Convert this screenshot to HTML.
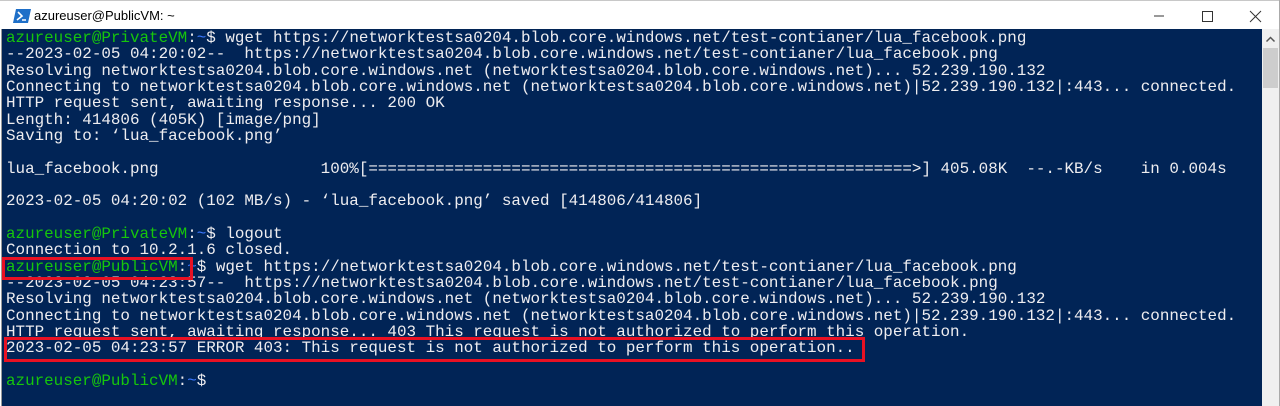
<!DOCTYPE html>
<html><head><meta charset="utf-8"><style>
*{margin:0;padding:0;box-sizing:border-box}
body{width:1280px;height:406px;overflow:hidden;background:#fff;position:relative;font-family:"Liberation Sans",sans-serif}
#title{position:absolute;left:0;top:0;width:1280px;height:29px;background:#fff;border-top:1px solid #c8c8c8}
#title .t{position:absolute;left:34px;top:7px;font-size:13px;color:#000}
#term{position:absolute;left:1px;top:29px;width:1261px;height:377px;background:#012456;border-left:1px solid #9a9a9a}
#sb{position:absolute;left:1262px;top:29px;width:17px;height:377px;background:#f0f0f0}
#sbb{position:absolute;left:1279px;top:0;width:1px;height:406px;background:#aaa}
#thumb{position:absolute;left:1263px;top:48px;width:15px;height:40px;background:#cdcdcd}
pre{position:absolute;left:6px;top:30px;font-family:"Liberation Mono",monospace;font-size:15.9px;line-height:16.33px;color:#eeedf0;white-space:pre}
.g{color:#16c60c}.b{color:#3b78ff}
.box{position:absolute;border:3px solid #e81123}
</style></head><body>
<div id="title">
<svg style="position:absolute;left:13px;top:8px" width="18" height="14" viewBox="0 0 18 14"><path d="M3 0H18L15 14H0Z" fill="#1e6fc8"/><path d="M5 3L9 7L4 11" stroke="#fff" stroke-width="1.6" fill="none"/><path d="M9 11H13" stroke="#fff" stroke-width="1.5"/></svg>
<span class="t">azureuser@PublicVM: ~</span>
<svg style="position:absolute;left:1150px;top:8px" width="120" height="14" viewBox="0 0 120 14"><path d="M4 7H14" stroke="#333" stroke-width="1"/><rect x="52.5" y="2.5" width="10" height="10" stroke="#333" fill="none"/><path d="M100 2L111 13M111 2L100 13" stroke="#333" stroke-width="1"/></svg>
</div>
<div id="term"></div>
<div id="sb"></div><div id="thumb"></div><div id="sbb"></div>
<svg style="position:absolute;left:1265px;top:36px" width="11" height="7" viewBox="0 0 11 7"><path d="M1.5 5.5L5.5 1.5L9.5 5.5" stroke="#555" stroke-width="1.5" fill="none"/></svg>
<pre><span class="g">azureuser@PrivateVM</span>:<span class="b">~</span>$ wget https://networktestsa0204.blob.core.windows.net/test-contianer/lua_facebook.png
--2023-02-05 04:20:02--  https://networktestsa0204.blob.core.windows.net/test-contianer/lua_facebook.png
Resolving networktestsa0204.blob.core.windows.net (networktestsa0204.blob.core.windows.net)... 52.239.190.132
Connecting to networktestsa0204.blob.core.windows.net (networktestsa0204.blob.core.windows.net)|52.239.190.132|:443... connected.
HTTP request sent, awaiting response... 200 OK
Length: 414806 (405K) [image/png]
Saving to: ‘lua_facebook.png’

lua_facebook.png                 100%[=========================================================>] 405.08K  --.-KB/s    in 0.004s

2023-02-05 04:20:02 (102 MB/s) - ‘lua_facebook.png’ saved [414806/414806]

<span class="g">azureuser@PrivateVM</span>:<span class="b">~</span>$ logout
Connection to 10.2.1.6 closed.
<span class="g">azureuser@PublicVM</span>:<span class="b">~</span>$ wget https://networktestsa0204.blob.core.windows.net/test-contianer/lua_facebook.png
--2023-02-05 04:23:57--  https://networktestsa0204.blob.core.windows.net/test-contianer/lua_facebook.png
Resolving networktestsa0204.blob.core.windows.net (networktestsa0204.blob.core.windows.net)... 52.239.190.132
Connecting to networktestsa0204.blob.core.windows.net (networktestsa0204.blob.core.windows.net)|52.239.190.132|:443... connected.
HTTP request sent, awaiting response... 403 This request is not authorized to perform this operation.
2023-02-05 04:23:57 ERROR 403: This request is not authorized to perform this operation..

<span class="g">azureuser@PublicVM</span>:<span class="b">~</span>$</pre>
<div class="box" style="left:2px;top:257px;width:191px;height:23px"></div>
<div class="box" style="left:4px;top:337px;width:861px;height:25px"></div>
</body></html>
